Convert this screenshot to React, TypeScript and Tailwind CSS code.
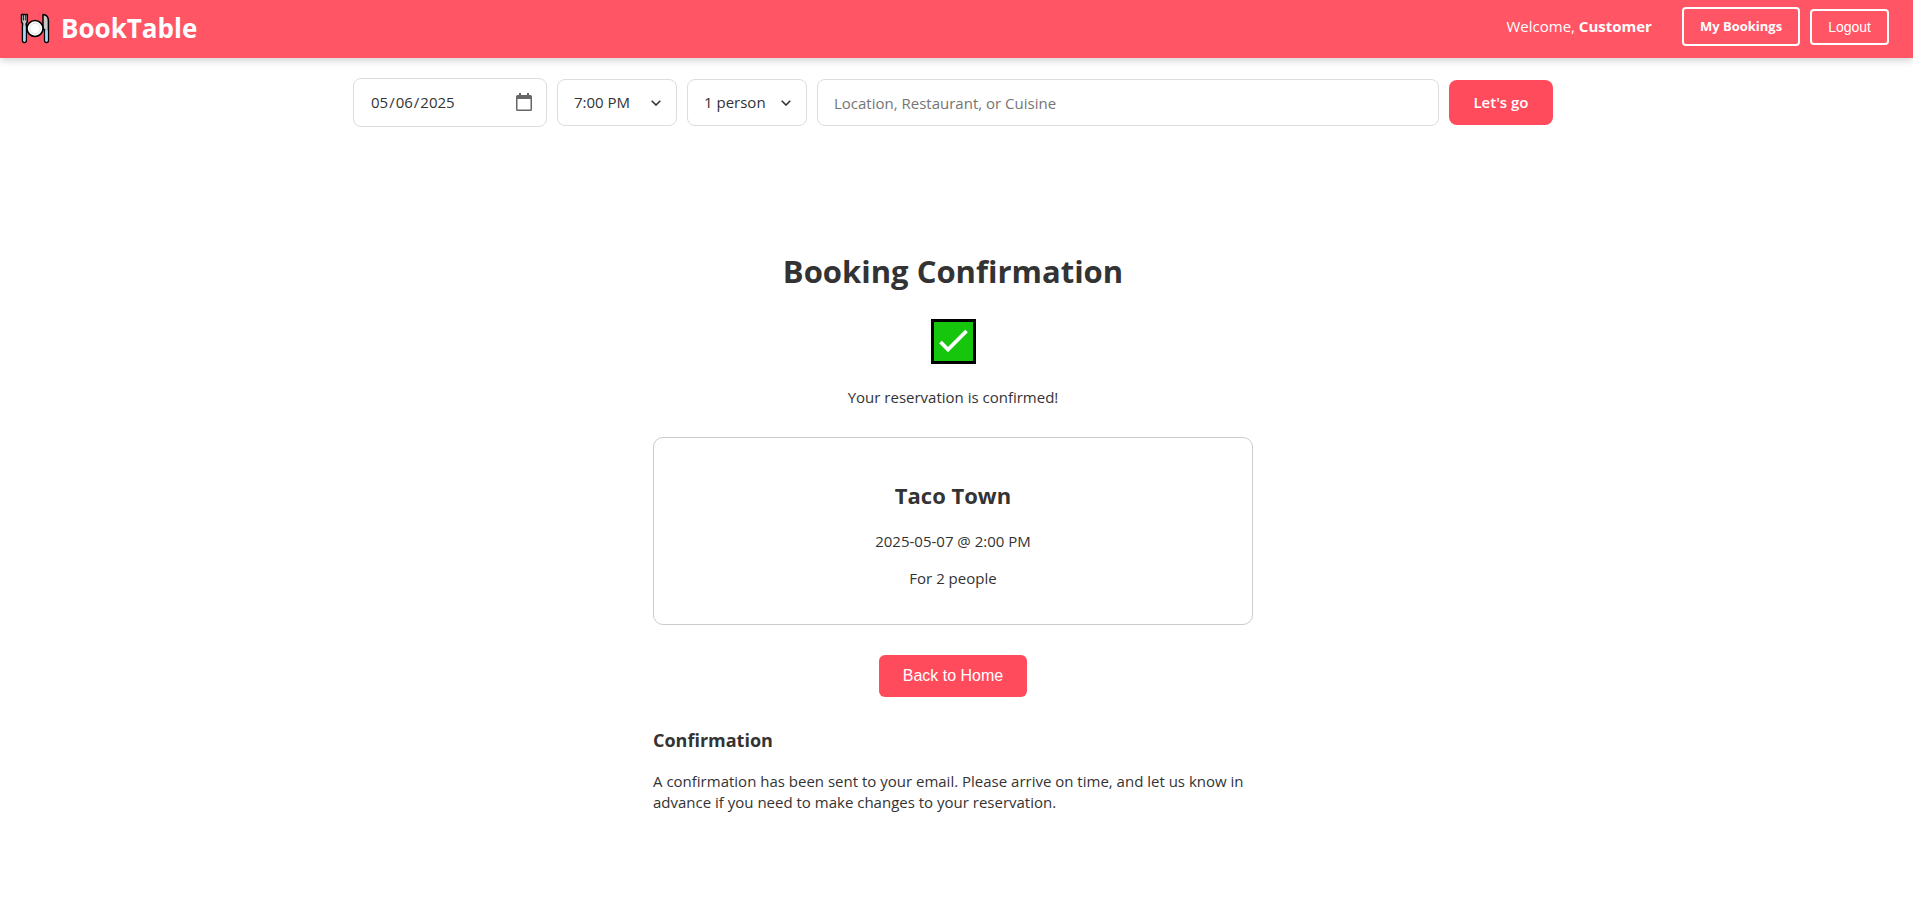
import { useState } from "react";

const times = ["6:00 PM", "6:30 PM", "7:00 PM", "7:30 PM", "8:00 PM"];
const parties = ["1 person", "2 people", "3 people", "4 people"];

function PlateIcon() {
  return (
    <svg viewBox="0 0 32 32" className="h-8 w-8" aria-hidden="true">
      <g stroke="#000" strokeWidth="1.500" strokeLinejoin="round">
        <path d="M2.500 2.500h5.800v6.800q0 1.300-1 2v17.200q0 1.900-1.900 1.900t-1.900-1.900V11.300q-1-.7-1-2Z" fill="#c8c8c8" />
        <path d="M24 2.500q5.400.300 5.400 6.500v19.500q0 1.900-1.900 1.900t-1.900-1.900V17.500H24Z" fill="#c8c8c8" />
      </g>
      <path d="M4.200 14h2.400v14.400q0 1.300-1.200 1.300t-1.200-1.300ZM26.300 18.200h2.400v10.200q0 1.300-1.200 1.300t-1.200-1.300Z" fill="#a9d8f5" />
      <path d="M4.500 2.500v6M6.400 2.500v6" stroke="#000" strokeWidth="0.800" />
      <circle cx="16" cy="16.500" r="8" fill="#fff" stroke="#000" strokeWidth="1.600" />
      <circle cx="16" cy="16.500" r="5.200" fill="none" stroke="#dedede" strokeWidth="0.900" />
    </svg>
  );
}

function CheckIcon() {
  return (
    <svg viewBox="0 0 45 45" className="h-[45px] w-[45px]" role="img" aria-label="Confirmed">
      <rect x="1.500" y="1.500" width="42" height="42" fill="#16c60c" stroke="#000" strokeWidth="3" />
      <path d="M9.500 23l7.500 7.500L35.500 12" fill="none" stroke="#fff" strokeWidth="3.800" />
    </svg>
  );
}

function CalendarIcon() {
  return (
    <svg viewBox="0 0 16 18" className="pointer-events-none absolute top-[15px] right-[15px] h-[18px] w-4" aria-hidden="true">
      <path
        d="M3 0h2v2h6V0h2v2h1.500Q16 2 16 3.500v13q0 1.500-1.500 1.500h-13Q0 18 0 16.500v-13Q0 2 1.500 2H3ZM1.500 6v10.500h13V6Z"
        fill="#666"
        fillRule="evenodd"
      />
    </svg>
  );
}

interface PickerProps {
  label: string;
  value: string;
  options: string[];
  onChange: (value: string) => void;
}

function Picker({ label, value, options, onChange }: PickerProps) {
  return (
    <div className="relative w-[120px]">
      <select
        aria-label={label}
        value={value}
        onChange={(e) => onChange(e.target.value)}
        className="h-[47px] w-full appearance-none rounded-lg border border-[#ddd] bg-white px-4"
      >
        {options.map((o) => (
          <option key={o}>{o}</option>
        ))}
      </select>
      <svg viewBox="0 0 10 6" className="pointer-events-none absolute top-[21px] right-4 h-[6px] w-[10px]" aria-hidden="true">
        <path d="M0.700 0.700L5 5L9.300 0.700" fill="none" stroke="#333" strokeWidth="1.600" />
      </svg>
    </div>
  );
}

function Header() {
  return (
    <header className="flex h-[58px] items-center justify-between bg-[#ff5564] px-6 text-white shadow-[0_2px_8px_rgba(0,0,0,0.2)]">
      <a href="#" className="-ml-[5px] flex items-center gap-[10px] pb-[2px] text-[26px] font-bold">
        <PlateIcon />
        BookTable
      </a>
      <nav className="flex items-center gap-[10px] pb-[5px]">
        <span className="mr-5 text-[15px]">
          Welcome, <strong>Customer</strong>
        </span>
        <a href="#bookings" className="flex h-[39px] items-center rounded-[4px] border-2 border-white px-4 text-[13px] font-bold">
          My Bookings
        </a>
        <button type="button" className="h-9 rounded-[4px] border-2 border-white px-4 font-['Liberation_Sans',sans-serif] text-sm">
          Logout
        </button>
      </nav>
    </header>
  );
}

function SearchBar() {
  const [date, setDate] = useState("2025-05-06");
  const [time, setTime] = useState("7:00 PM");
  const [party, setParty] = useState("1 person");
  return (
    <form className="mx-auto flex max-w-[1200px] items-center gap-[10px] text-[15px]" onSubmit={(e) => e.preventDefault()}>
      <div className="relative w-[194px]">
        <input
          type="date"
          aria-label="Date"
          value={date}
          onChange={(e) => setDate(e.target.value)}
          className="block h-[49px] w-full rounded-lg border border-[#ddd] px-4 [&::-webkit-calendar-picker-indicator]:opacity-0"
        />
        <CalendarIcon />
      </div>
      <Picker label="Time" value={time} options={times} onChange={setTime} />
      <Picker label="Party size" value={party} options={parties} onChange={setParty} />
      <input
        type="text"
        aria-label="Search"
        placeholder="Location, Restaurant, or Cuisine"
        className="h-[47px] min-w-0 flex-1 rounded-lg border border-[#ddd] px-4 placeholder:text-[#757575]"
      />
      <button type="submit" className="h-[45px] w-[104px] rounded-lg bg-[#ff4b5c] font-semibold text-white">
        Let's go
      </button>
    </form>
  );
}

export default function App() {
  return (
    <div className="min-h-screen bg-white font-['Open_Sans','Noto_Sans',sans-serif] text-[15px] leading-[21px] text-[#333]">
      <Header />
      <div className="pt-5 pr-[7px]">
        <SearchBar />
        <main className="mx-auto flex max-w-[600px] flex-col items-center pt-[123px] pb-10 text-center">
          <h1 className="text-[31px] leading-[43px] font-bold">Booking Confirmation</h1>
          <div className="mt-[26px]">
            <CheckIcon />
          </div>
          <p className="mt-[23px]">Your reservation is confirmed!</p>
          <section className="mt-[29px] flex w-full flex-col items-center rounded-[10px] border border-[#ccc] px-6 pt-[41px] pb-[35px]">
            <h2 className="text-[22px] leading-8 font-bold">Taco Town</h2>
            <p className="mt-5">2025-05-07 @ 2:00 PM</p>
            <p className="mt-4">For 2 people</p>
          </section>
          <button
            type="button"
            className="mt-[30px] h-[42px] rounded-md bg-[#ff4b5c] px-6 font-['Liberation_Sans',sans-serif] text-base text-white"
          >
            Back to Home
          </button>
          <section className="mt-[31px] w-full text-left">
            <h3 className="text-lg leading-6 font-bold">Confirmation</h3>
            <p className="mt-[19px]">
              A confirmation has been sent to your email. Please arrive on time, and let us know in advance if you need to make
              changes to your reservation.
            </p>
          </section>
        </main>
      </div>
    </div>
  );
}
